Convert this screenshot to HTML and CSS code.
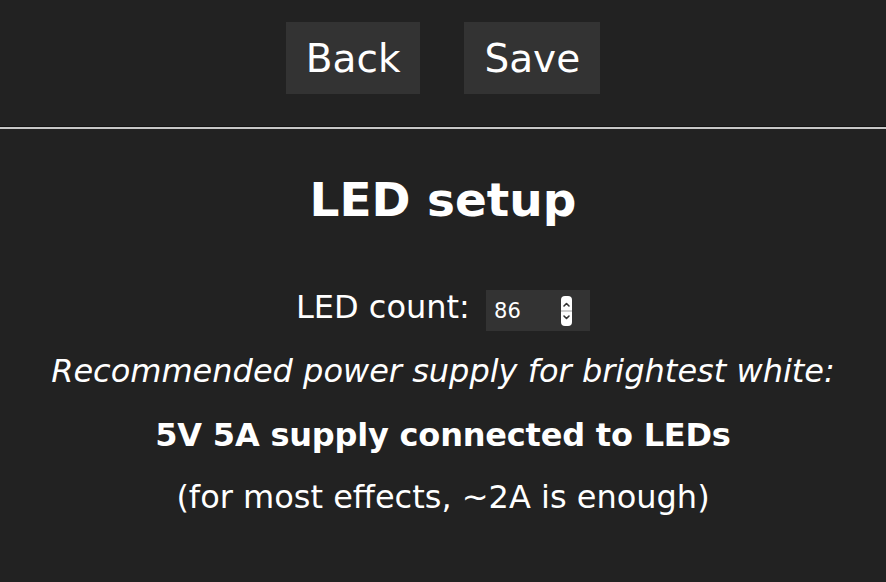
FILE: index.html
```html
<!DOCTYPE html>
<html lang="en">
<head>
    <meta charset="UTF-8">
    <title>LED Settings</title>
    <link rel="stylesheet" href="styles.css">
</head>
<body>

<form id="form_s" name="Sf">
    <!--top buttons-->
    <div class="toolbar">
        <button type="button" class="btn">Back</button>
        <button type="submit" class="btn">Save</button>
    </div>
    <hr>

    <h2>LED setup</h2>
    <div class="row first">
        LED count:
        <span class="num">
            <span class="num-val">86</span>
            <svg class="spin" width="11" height="30" viewBox="0 0 11 30">
                <rect x="0" y="0" width="11" height="30" rx="4" fill="#fff"/>
                <rect x="0" y="14" width="11" height="2" fill="#cfcfcf"/>
                <path d="M3 10 L5.5 7.5 L8 10" fill="none" stroke="#333" stroke-width="1.6" stroke-linecap="round" stroke-linejoin="round"/>
                <path d="M3 20 L5.5 22.5 L8 20" fill="none" stroke="#333" stroke-width="1.6" stroke-linecap="round" stroke-linejoin="round"/>
            </svg>
        </span>
    </div>
    <div class="row"><i>Recommended power supply for brightest white:</i></div>
    <div class="row"><b id="psu">5V 5A supply connected to LEDs</b></div>
    <div class="row last" id="psu2">(for most effects, ~2A is enough)</div>
</form>

</body>
</html>
```

FILE: styles.css
```css
* {
    box-sizing: border-box;
}

body {
    margin: 0;
    background-color: #222;
    color: #fff;
    font-family: "DejaVu Sans", Verdana, sans-serif;
    text-align: center;
}

.toolbar {
    display: flex;
    justify-content: center;
    gap: 44px;
    padding-top: 22px;
}

.btn {
    height: 72px;
    padding: 0 20px;
    background-color: #333;
    color: #fff;
    border: 0;
    font-family: "DejaVu Sans", Verdana, sans-serif;
    font-size: 39px;
}

hr {
    height: 0;
    margin: 32px 0 0;
    border: 0;
    border-top: 1px solid #141414;
    border-bottom: 2px solid #c8c8c8;
}

h2 {
    margin: 45px 0 0;
    font-size: 47px;
    line-height: 52px;
}

.row {
    font-size: 32px;
    line-height: 64px;
}

.row.first {
    margin-top: 49px;
}

.row b {
    letter-spacing: -0.2px;
}

.row.last {
    margin-top: -2px;
}

.num {
    display: inline-flex;
    align-items: center;
    justify-content: space-between;
    width: 104px;
    height: 41px;
    padding: 0 18px 0 8px;
    margin-left: 6px;
    background-color: #333;
    vertical-align: 0;
    text-align: left;
}

.num-val {
    font-size: 21px;
    line-height: 41px;
    padding-top: 2px;
}

.spin {
    display: block;
    flex-shrink: 0;
    width: 11px;
    height: 30px;
}
```
